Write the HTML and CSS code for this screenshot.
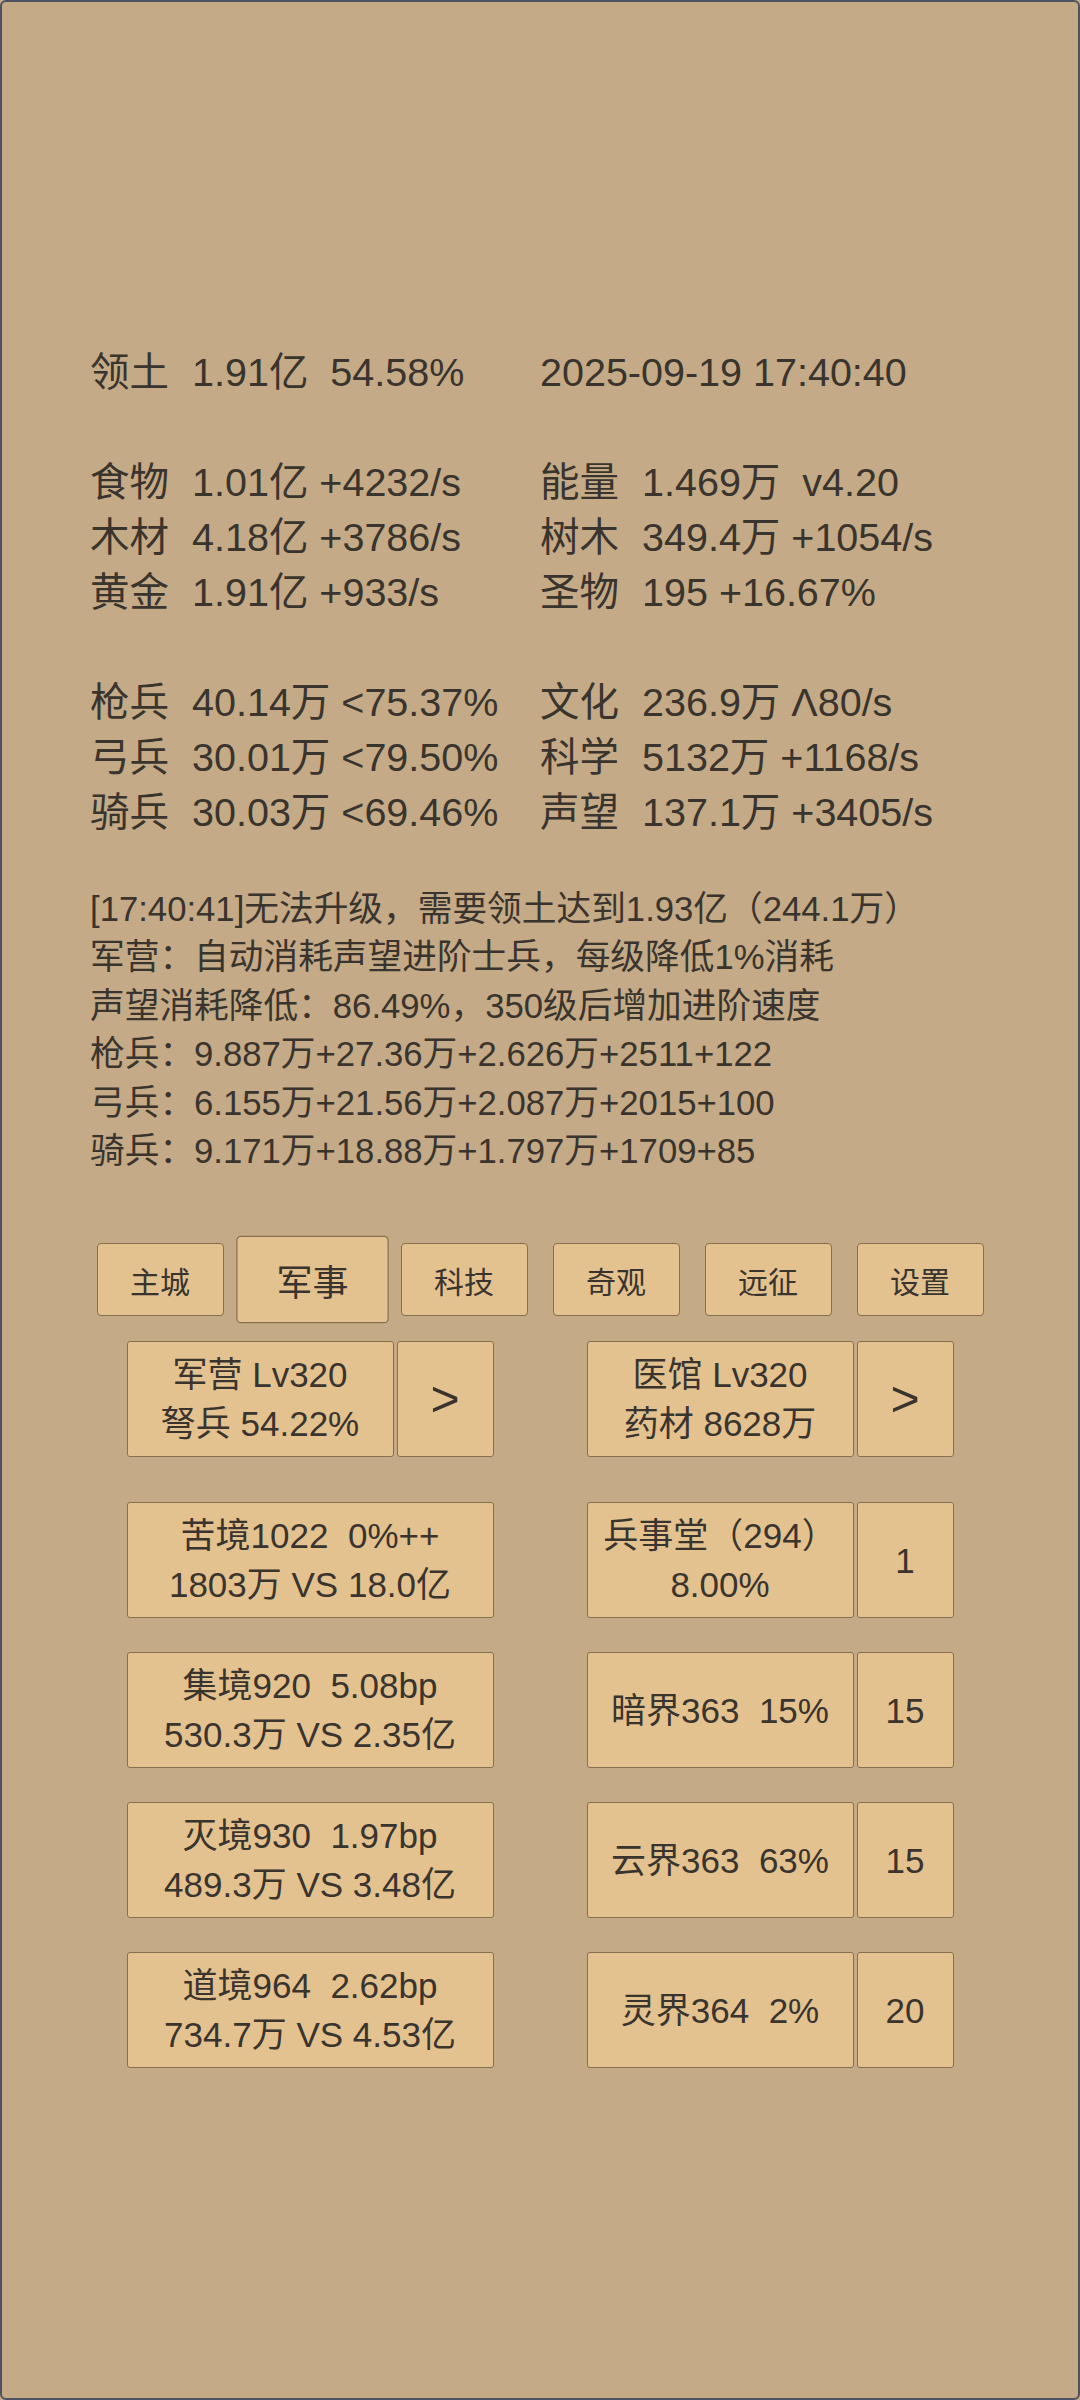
FILE: index.html
```
<!DOCTYPE html>
<html lang="zh-CN">
<head>
<meta charset="utf-8">
<title>领土</title>
<link rel="stylesheet" href="styles.css">
</head>
<body>
<div class="screen">
  <div class="stats">
    <div class="row"><div class="cell"><span class="lbl">领土</span><span class="val">1.91亿  54.58%</span></div><div class="cell">2025-09-19 17:40:40</div></div>
    <div class="row"></div>
    <div class="row"><div class="cell"><span class="lbl">食物</span><span class="val">1.01亿 +4232/s</span></div><div class="cell"><span class="lbl">能量</span><span class="val">1.469万  v4.20</span></div></div>
    <div class="row"><div class="cell"><span class="lbl">木材</span><span class="val">4.18亿 +3786/s</span></div><div class="cell"><span class="lbl">树木</span><span class="val">349.4万 +1054/s</span></div></div>
    <div class="row"><div class="cell"><span class="lbl">黄金</span><span class="val">1.91亿 +933/s</span></div><div class="cell"><span class="lbl">圣物</span><span class="val">195 +16.67%</span></div></div>
    <div class="row"></div>
    <div class="row"><div class="cell"><span class="lbl">枪兵</span><span class="val">40.14万 &lt;75.37%</span></div><div class="cell"><span class="lbl">文化</span><span class="val">236.9万 Λ80/s</span></div></div>
    <div class="row"><div class="cell"><span class="lbl">弓兵</span><span class="val">30.01万 &lt;79.50%</span></div><div class="cell"><span class="lbl">科学</span><span class="val">5132万 +1168/s</span></div></div>
    <div class="row"><div class="cell"><span class="lbl">骑兵</span><span class="val">30.03万 &lt;69.46%</span></div><div class="cell"><span class="lbl">声望</span><span class="val">137.1万 +3405/s</span></div></div>
  </div>

  <div class="log">
    <div>[17:40:41]无法升级，需要领土达到1.93亿（244.1万）</div>
    <div>军营：自动消耗声望进阶士兵，每级降低1%消耗</div>
    <div>声望消耗降低：86.49%，350级后增加进阶速度</div>
    <div>枪兵：9.887万+27.36万+2.626万+2511+122</div>
    <div>弓兵：6.155万+21.56万+2.087万+2015+100</div>
    <div>骑兵：9.171万+18.88万+1.797万+1709+85</div>
  </div>

  <div class="tabs">
    <div class="tab-cell"><div class="tab">主城</div></div>
    <div class="tab-cell"><div class="tab active">军事</div></div>
    <div class="tab-cell"><div class="tab">科技</div></div>
    <div class="tab-cell"><div class="tab">奇观</div></div>
    <div class="tab-cell"><div class="tab">远征</div></div>
    <div class="tab-cell"><div class="tab">设置</div></div>
  </div>

  <div class="grid">
    <div class="line building">
      <div class="group">
        <div class="box main">军营 Lv320<br>弩兵 54.22%</div>
        <div class="box side arrow">&gt;</div>
      </div>
      <div class="group">
        <div class="box main">医馆 Lv320<br>药材 8628万</div>
        <div class="box side arrow">&gt;</div>
      </div>
    </div>

    <div class="realms">
      <div class="line">
        <div class="group"><div class="box main">苦境1022  0%++<br>1803万 VS 18.0亿</div></div>
        <div class="group"><div class="box main">兵事堂（294）<br>8.00%</div><div class="box side">1</div></div>
      </div>
      <div class="line">
        <div class="group"><div class="box main">集境920  5.08bp<br>530.3万 VS 2.35亿</div></div>
        <div class="group"><div class="box main">暗界363  15%</div><div class="box side">15</div></div>
      </div>
      <div class="line">
        <div class="group"><div class="box main">灭境930  1.97bp<br>489.3万 VS 3.48亿</div></div>
        <div class="group"><div class="box main">云界363  63%</div><div class="box side">15</div></div>
      </div>
      <div class="line">
        <div class="group"><div class="box main">道境964  2.62bp<br>734.7万 VS 4.53亿</div></div>
        <div class="group"><div class="box main">灵界364  2%</div><div class="box side">20</div></div>
      </div>
    </div>
  </div>
</div>
</body>
</html>
```

FILE: styles.css
```
* {
  box-sizing: border-box;
}

html, body {
  margin: 0;
  padding: 0;
  background: #c4aa86;
}

body {
  font-family: "Liberation Sans", "Noto Sans CJK SC", sans-serif;
  color: #3a342e;
}

.screen {
  width: 1080px;
  height: 2400px;
  border: 2px solid #4b5262;
  border-radius: 6px;
  background: #c4aa86;
  padding-top: 343px;
  overflow: hidden;
}

.stats {
  padding-left: 88px;
  font-size: 39.5px;
}

.row {
  display: grid;
  grid-template-columns: 450px 1fr;
  height: 55px;
  line-height: 55px;
  white-space: pre;
}

.cell {
  display: flex;
}

.lbl {
  width: 102px;
  flex: none;
}

.log {
  margin-top: 45px;
  padding-left: 88px;
  font-size: 34.7px;
  line-height: 48.4px;
  white-space: nowrap;
}

.tabs {
  display: flex;
  width: 912px;
  margin: 68px auto 0;
}

.tab-cell {
  width: 152px;
  display: flex;
  justify-content: center;
}

.tab {
  width: 127px;
  height: 73px;
  background: #e3c290;
  border: 1px solid #86704f;
  border-radius: 4px;
  font-size: 30px;
  display: flex;
  align-items: center;
  justify-content: center;
}

.tab.active {
  transform: scale(1.2);
}

.grid {
  width: 827px;
  margin: 25px auto 0;
}

.realms {
  display: flex;
  flex-direction: column;
  gap: 34px;
  margin-top: 45px;
}

.line {
  display: flex;
  justify-content: space-between;
  height: 116px;
}

.group {
  width: 367px;
  display: flex;
  gap: 3px;
}

.box {
  height: 116px;
  background: #e3c290;
  border: 1px solid #86704f;
  border-radius: 3px;
  font-size: 35px;
  line-height: 49px;
  white-space: pre;
  display: flex;
  align-items: center;
  justify-content: center;
  text-align: center;
}

.box.main {
  flex: 1;
}

.box.side {
  width: 97px;
  flex: none;
}

.box.arrow {
  font-size: 50px;
}
```
